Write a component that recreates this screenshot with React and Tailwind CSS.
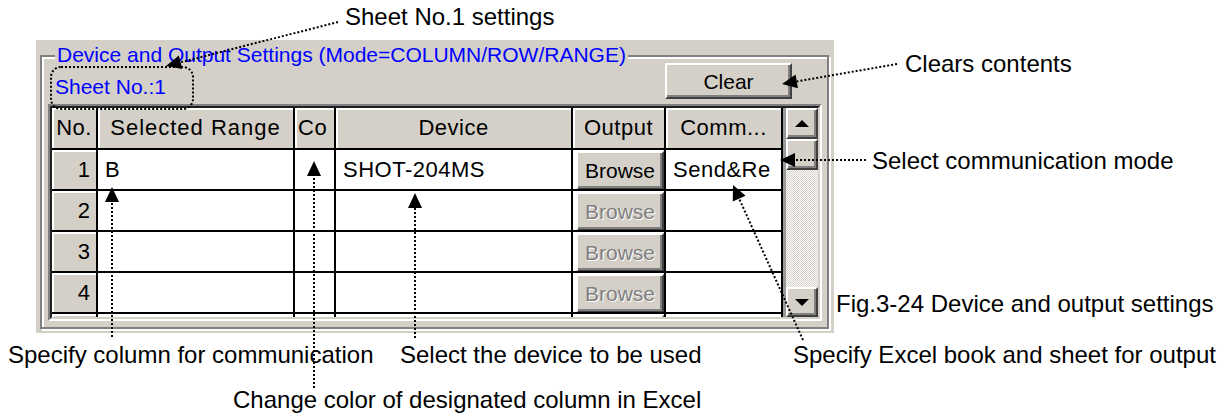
import React from "react";

const raised =
  "bg-[#d4d0c8] border-2 border-t-white border-l-white border-r-[#404040] border-b-[#404040] shadow-[inset_-2px_-2px_0_#808080]";

function Arrow({ from, to, len = 15, w = 7 }) {
  const [x1, y1] = from;
  const [x2, y2] = to;
  const dx = x1 - x2;
  const dy = y1 - y2;
  const L = Math.hypot(dx, dy);
  const ux = dx / L;
  const uy = dy / L;
  const bx = x2 + ux * len;
  const by = y2 + uy * len;
  const nx = -uy;
  const ny = ux;
  return (
    <g>
      <line x1={x1} y1={y1} x2={bx} y2={by} stroke="#000" strokeWidth="2" strokeDasharray="2 2" />
      <polygon
        points={`${x2},${y2} ${bx + nx * w},${by + ny * w} ${bx - nx * w},${by - ny * w}`}
        fill="#000"
      />
    </g>
  );
}

function Head({ children, className = "" }) {
  return (
    <div
      className={`bg-[#d4d0c8] border-r-2 border-b-2 border-black shadow-[inset_2px_2px_0_#fff] flex items-center overflow-hidden whitespace-nowrap text-[22px] leading-none tracking-[0.5px] ${className}`}
    >
      {children}
    </div>
  );
}

function NumCell({ n }) {
  return (
    <div className="bg-[#d4d0c8] border-r-2 border-b-2 border-black shadow-[inset_2px_2px_0_#fff] flex items-center justify-end pr-[6px] text-[22px] leading-none">
      {n}
    </div>
  );
}

function Cell({ children }) {
  return (
    <div className="bg-white border-r-2 border-b-2 border-black flex items-center pl-[7px] overflow-hidden whitespace-nowrap text-[22px] leading-none tracking-[0.5px]">
      {children}
    </div>
  );
}

function BrowseCell({ enabled, label = "Browse" }) {
  return (
    <div className="bg-white border-r-2 border-b-2 border-black pl-[3px] pt-[1px] overflow-hidden">
      <div
        className={`${raised} h-[39px] flex items-center justify-center text-[21px] leading-none ${
          enabled ? "text-black" : "text-[#808080] [text-shadow:1px_1px_0_#fff]"
        }`}
      >
        {label}
      </div>
    </div>
  );
}

function Row({ n, range = "", dev = "", comm = "", enabled = false, label = "Browse" }) {
  return (
    <>
      <NumCell n={n} />
      <Cell>{range}</Cell>
      <Cell />
      <Cell>{dev}</Cell>
      <BrowseCell enabled={enabled} label={label} />
      <Cell>{comm}</Cell>
    </>
  );
}

export default function App() {
  return (
    <div className="relative w-[1227px] h-[414px] bg-white overflow-hidden font-['Liberation_Sans',Arial,sans-serif] text-black">
      <div className="ml-[36px] mt-[40px] w-[798px] h-[293px] bg-[#d4d0c8] pt-[15px] pl-[4px]">
        <div className="relative w-[789px] h-[274px] border-2 border-[#808080] shadow-[inset_2px_2px_0_#fff,2px_2px_0_#fff]">
          <span className="absolute left-[13px] -top-[13px] px-[2px] bg-[#d4d0c8] text-[#0000ff] text-[21px] leading-[21px] whitespace-nowrap">
            Device and Output Settings (Mode=COLUMN/ROW/RANGE)
          </span>
          <div className="flex justify-between items-end mt-[6px] pl-[13px] pr-[35px]">
            <span className="text-[#0000ff] text-[21px] leading-[21px] mb-[2px]">Sheet No.:1</span>
            <div className={`${raised} w-[127px] h-[36px] flex items-center justify-center text-[21px] leading-none`}>
              Clear
            </div>
          </div>
          <div className="ml-[6px] mt-[5px] w-[774px] h-[217px] border-2 border-t-[#808080] border-l-[#808080] border-r-white border-b-white">
            <div className="h-full border-2 border-t-[#202020] border-l-[#202020] border-r-[#d4d0c8] border-b-[#d4d0c8] flex">
              <div className="w-[731px] h-full overflow-hidden grid grid-cols-[46px_197px_41px_237px_93px_117px] grid-rows-[42px] auto-rows-[41px]">
                <Head className="justify-center">No.</Head>
                <Head className="justify-center tracking-[1px]">Selected Range</Head>
                <Head className="justify-start pl-[3px]">Co</Head>
                <Head className="justify-center">Device</Head>
                <Head className="justify-center">Output</Head>
                <Head className="justify-center">Comm...</Head>
                <Row n="1" range="B" dev="SHOT-204MS" comm="Send&Re" enabled />
                <Row n="2" />
                <Row n="3" />
                <Row n="4" />
                <Row n="" label="" />
              </div>
              <div className="w-[35px] h-full border-l-[3px] border-[#9a9a9a] flex flex-col">
                <div className={`${raised} h-[31px] flex items-center justify-center`}>
                  <svg width="14" height="8" viewBox="0 0 14 8">
                    <polygon points="0,7 7,0 14,7" fill="#000" />
                  </svg>
                </div>
                <div className={`${raised} h-[31px]`} />
                <div className="flex-1 bg-[image:repeating-conic-gradient(#ffffff_0%_25%,#d4d0c8_0%_50%)] bg-[length:2px_2px]" />
                <div className={`${raised} h-[30px] flex items-center justify-center`}>
                  <svg width="14" height="8" viewBox="0 0 14 8">
                    <polygon points="0,1 14,1 7,8" fill="#000" />
                  </svg>
                </div>
              </div>
            </div>
          </div>
        </div>
      </div>

      <svg className="absolute left-0 top-0 pointer-events-none" width="1227" height="414" viewBox="0 0 1227 414">
        <rect x="51" y="67" width="142" height="42" rx="10" fill="none" stroke="#000" strokeWidth="2" strokeDasharray="2 2" />
        <Arrow from={[338, 22]} to={[166, 66]} />
        <Arrow from={[897, 64]} to={[782, 84]} />
        <Arrow from={[866, 160]} to={[780, 160]} />
        <Arrow from={[112, 337]} to={[112, 187]} />
        <Arrow from={[314, 388]} to={[314, 161]} />
        <Arrow from={[415, 338]} to={[415, 193]} />
        <Arrow from={[803, 340]} to={[733, 185]} />
      </svg>

      <span className="absolute left-[345px] top-[5px] text-[24px] leading-[24px] whitespace-nowrap">Sheet No.1 settings</span>
      <span className="absolute left-[905px] top-[52px] text-[24px] leading-[24px] whitespace-nowrap">Clears contents</span>
      <span className="absolute left-[872px] top-[149px] text-[24px] leading-[24px] whitespace-nowrap">Select communication mode</span>
      <span className="absolute left-[836px] top-[292px] text-[24px] leading-[24px] whitespace-nowrap">Fig.3-24 Device and output settings</span>
      <span className="absolute left-[8px] top-[343px] text-[24px] leading-[24px] whitespace-nowrap">Specify column for communication</span>
      <span className="absolute left-[400px] top-[343px] text-[24px] leading-[24px] whitespace-nowrap">Select the device to be used</span>
      <span className="absolute left-[793px] top-[343px] text-[24px] leading-[24px] whitespace-nowrap">Specify Excel book and sheet for output</span>
      <span className="absolute left-[233px] top-[388px] text-[24px] leading-[24px] whitespace-nowrap">Change color of designated column in Excel</span>
    </div>
  );
}
